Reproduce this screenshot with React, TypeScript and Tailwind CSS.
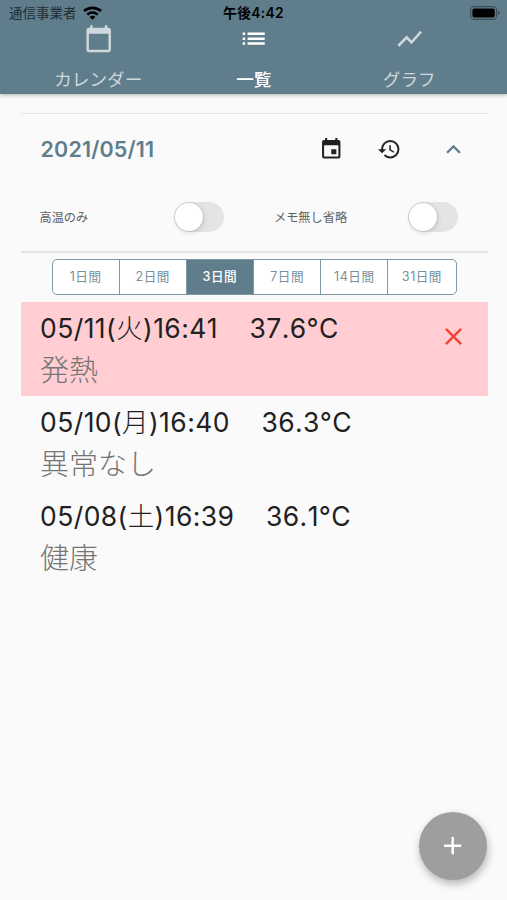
import React, { useState } from 'react';
import {
  MdAdd,
  MdCalendarToday,
  MdClose,
  MdEvent,
  MdExpandLess,
  MdHistory,
  MdList,
  MdShowChart,
} from 'react-icons/md';

interface TemperatureRecord {
  date: string;
  weekday: string;
  time: string;
  temperature: string;
  memo: string;
  fever: boolean;
}

const records: TemperatureRecord[] = [
  { date: '05/11', weekday: '火', time: '16:41', temperature: '37.6°C', memo: '発熱', fever: true },
  { date: '05/10', weekday: '月', time: '16:40', temperature: '36.3°C', memo: '異常なし', fever: false },
  { date: '05/08', weekday: '土', time: '16:39', temperature: '36.1°C', memo: '健康', fever: false },
];

const periods = [1, 2, 3, 7, 14, 31];

const tabs = [
  { label: 'カレンダー', icon: MdCalendarToday },
  { label: '一覧', icon: MdList },
  { label: 'グラフ', icon: MdShowChart },
];

const StatusBar: React.FC = () => (
  <div className="grid h-[27px] grid-cols-3 items-center px-[9px] text-[13.5px] leading-none text-black">
    <div className="flex items-center gap-1.5 text-[#1f2d34]">
      <span className="pt-px">通信事業者</span>
      <svg className="mt-[-2px] h-[14px] w-[19px] text-black" viewBox="0 0 19 14" fill="none" stroke="currentColor">
        <path d="M1 5.1C5.8.7 13.2.7 18 5.1" strokeWidth="2.7" />
        <path d="M4.3 8.6c2.9-2.7 7.5-2.7 10.4 0" strokeWidth="2.5" />
        <path d="M9.5 13.8 6.6 10.9c1.6-1.5 4.2-1.5 5.8 0z" fill="currentColor" stroke="none" />
      </svg>
    </div>
    <div className="pt-px text-center text-[13.8px] font-semibold tracking-[0.3px]">午後4:42</div>
    <div className="flex justify-end">
      <svg className="mr-[-2px] mt-[-1px] h-[14px] w-[30px]" viewBox="0 0 30 14">
        <rect x=".6" y=".6" width="26" height="12.8" rx="3.6" fill="none" stroke="#3a4f5a" strokeWidth="1.1" />
        <rect x="2.4" y="2.4" width="22.4" height="9.2" rx="2" fill="#000" />
        <path d="M28 4.8c1.9.6 1.9 3.8 0 4.4z" fill="#3a4f5a" />
      </svg>
    </div>
  </div>
);

const Toggle: React.FC<{ checked: boolean; onChange: () => void }> = ({ checked, onChange }) => (
  <button
    role="switch"
    aria-checked={checked}
    onClick={onChange}
    className={`flex h-[30px] w-[50px] items-center rounded-full p-px ${
      checked ? 'justify-end bg-[#607d8b]' : 'justify-start bg-[#e4e4e4]'
    }`}
  >
    <span className="size-7 rounded-full bg-white shadow-[0_0_0_1px_rgba(0,0,0,0.08),1px_2px_5px_rgba(0,0,0,0.12)]" />
  </button>
);

const RecordRow: React.FC<{ record: TemperatureRecord }> = ({ record }) => (
  <li className={`flex h-[94px] items-start justify-between pl-[19.5px] pr-5 ${record.fever ? 'bg-[#ffcdd2]' : ''}`}>
    <div>
      <div className="flex h-[53px] items-center text-[26.5px] leading-none tracking-[0.42px] text-[#212121] [font-kerning:none]">
        <span className="whitespace-nowrap">
          {record.date}(<span className="font-light">{record.weekday}</span>){record.time}
        </span>
        <span className="ml-[31.5px]">{record.temperature}</span>
      </div>
      <p className="mt-[1px] text-[29px] font-light leading-[29px] text-[#757575]">{record.memo}</p>
    </div>
    {record.fever && (
      <button aria-label="削除" className="mt-5 text-[#f44336]">
        <MdClose className="size-[29px]" />
      </button>
    )}
  </li>
);

export default function App() {
  const [activeTab, setActiveTab] = useState(1);
  const [period, setPeriod] = useState(3);
  const [feverOnly, setFeverOnly] = useState(false);
  const [skipEmpty, setSkipEmpty] = useState(false);

  return (
    <div className="relative flex h-[900px] w-[507px] flex-col overflow-hidden bg-[#fafafa] font-['Inter','Noto_Sans_CJK_JP',sans-serif]">
      <header className="h-[94px] shrink-0 bg-[#607d8b] shadow-[0_1px_4px_rgba(0,0,0,0.3)]">
        <StatusBar />
        <nav className="grid grid-cols-3 pl-[20.5px] pr-5">
          {tabs.map(({ label, icon: Icon }, index) => (
            <button
              key={label}
              onClick={() => setActiveTab(index)}
              className={`flex h-[67px] flex-col items-center text-[17.6px] leading-none ${
                activeTab === index ? 'font-medium text-white' : 'text-[#cfd8dc]'
              }`}
            >
              <Icon className="mt-[-3px] size-[29.4px]" />
              <span className="mt-[18px]">{label}</span>
            </button>
          ))}
        </nav>
      </header>

      <main className="ml-[20.5px] mr-[19.5px] mt-[19px]">
        {/* Date and filters */}
        <section className="h-[139.5px] border-b-2 border-t-[1.5px] border-[#e4e4e4]">
          <div className="flex h-[70px] items-center pl-5 pr-5">
            <h1 className="flex-1 pt-px text-[21.5px] font-semibold leading-none tracking-[0.15px] text-[#607d8b]">
              2021/05/11
            </h1>
            <button aria-label="日付">
              <MdEvent className="size-[24.5px] text-[#212121]" />
            </button>
            <button aria-label="履歴" className="ml-[34px]">
              <MdHistory className="size-[24.5px] text-[#212121]" />
            </button>
            <button aria-label="閉じる" className="ml-[37px]">
              <MdExpandLess className="size-[29px] text-[#607d8b]" />
            </button>
          </div>
          <div className="grid h-[66px] grid-cols-2 text-[12.2px] text-[#616161]">
            <div className="flex items-center justify-between pl-[19px] pr-[30px]">
              <span className="pt-[2px]">高温のみ</span>
              <Toggle checked={feverOnly} onChange={() => setFeverOnly(!feverOnly)} />
            </div>
            <div className="flex items-center justify-between pl-[20px] pr-[30px]">
              <span className="pt-[2px]">メモ無し省略</span>
              <Toggle checked={skipEmpty} onChange={() => setSkipEmpty(!skipEmpty)} />
            </div>
          </div>
        </section>

        {/* Period selector */}
        <div className="mx-auto mt-[6.5px] grid h-9 w-[405px] grid-cols-6 divide-x-[1.5px] divide-[#8199a4] overflow-hidden rounded-[5px] border-[1.5px] border-[#8199a4] bg-white">
          {periods.map((days) => (
            <button
              key={days}
              onClick={() => setPeriod(days)}
              className={`pt-px text-[12.6px] leading-none tracking-[0.5px] ${
                period === days ? 'bg-[#607d8b] font-medium text-white' : 'text-[#78909c]'
              }`}
            >
              {days}日間
            </button>
          ))}
        </div>

        {/* Records */}
        <ul className="mt-[7px]">
          {records.map((record) => (
            <RecordRow key={record.date} record={record} />
          ))}
        </ul>
      </main>

      <button
        aria-label="追加"
        className="absolute bottom-5 right-5 flex size-[68px] items-center justify-center rounded-full bg-[#9e9e9e] text-white shadow-[1px_4px_8px_rgba(0,0,0,0.28)]"
      >
        <MdAdd className="size-[29.4px]" />
      </button>
    </div>
  );
}
